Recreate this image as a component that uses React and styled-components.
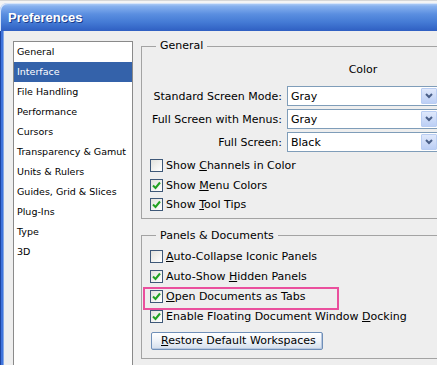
import React from 'react';
import styled, { createGlobalStyle } from 'styled-components';

const GlobalStyle = createGlobalStyle`
  html, body {
    margin: 0;
    padding: 0;
    background: #f2f2f2;
    overflow: hidden;
  }
`;

const Screen = styled.div`
  width: 437px;
  height: 365px;
  overflow: hidden;
  padding-top: 2px;
  box-sizing: border-box;
  background: #f4f4f4;
  border-top: 1px solid #d6d6d6;
`;

const Window = styled.div`
  width: 480px;
`;

const TitleBar = styled.div`
  height: 28px;
  display: flex;
  align-items: center;
  padding-left: 8px;
  border-radius: 7px 0 0 0;
  background: linear-gradient(
    to bottom,
    #b8d3f7 0%,
    #86b0ee 12%,
    #5a8ee0 40%,
    #4379d4 70%,
    #2f5fc2 100%
  );
  box-shadow: inset 1px 1px 0 #d6e4fa;
`;

const Title = styled.span`
  font-family: "Liberation Sans", Arial, sans-serif;
  font-weight: bold;
  font-size: 13px;
  color: #fff;
  text-shadow: 1px 1px 0 #1a3c8c;
`;

const Body = styled.div`
  display: flex;
  align-items: flex-start;
  gap: 8px;
  padding: 10px 0 0 13px;
  height: 340px;
  background: linear-gradient(
    to right,
    #1d44a2 0 1px,
    #3f74dc 1px 3px,
    #86a8e4 3px 4px,
    #eeeeee 4px
  );
  font-family: "DejaVu Sans", Tahoma, sans-serif;
  color: #000;
`;

const ListBox = styled.ul`
  list-style: none;
  margin: 0;
  padding: 0;
  width: 120px;
  height: 340px;
  box-sizing: border-box;
  border: 1px solid #8a8a8a;
  background: #fff;
`;

const ListItem = styled.li`
  height: 20px;
  line-height: 20px;
  padding-left: 3px;
  font-size: 9.5px;
  white-space: nowrap;
  background: ${p => (p.$selected ? '#3462aa' : 'transparent')};
  color: ${p => (p.$selected ? '#fff' : '#000')};
`;

const Column = styled.div`
  display: flex;
  flex-direction: column;
  width: 312px;
  margin-top: -2px;
`;

const Group = styled.fieldset`
  margin: ${p => (p.$spaced ? '10px' : '0')} 0 0 0;
  padding: ${p => p.$pad};
  border: 1px solid #a3a3a3;
  font-size: 11px;
`;

const Legend = styled.legend`
  margin-left: 14px;
  padding: 0 4px;
  line-height: 14px;
  font-size: 11px;
`;

const SelectGrid = styled.div`
  display: grid;
  grid-template-columns: 140px 152px;
  column-gap: 5px;
  row-gap: 3px;
  align-items: center;
`;

const ColorHead = styled.div`
  grid-column: 2;
  text-align: center;
  line-height: 14px;
  margin-bottom: 6px;
`;

const Label = styled.div`
  text-align: right;
  white-space: nowrap;
`;

const Select = styled.div`
  height: 20px;
  box-sizing: border-box;
  border: 1px solid #7f9db9;
  background: #fff;
  display: flex;
  align-items: center;
  justify-content: space-between;
  padding-left: 3px;
`;

const ArrowButton = styled.div`
  width: 16px;
  height: 16px;
  margin-right: 1px;
  box-sizing: border-box;
  border: 1px solid #b9cdf2;
  border-radius: 1px;
  background: linear-gradient(to bottom, #dfe8fb, #bccff5);
  display: flex;
  align-items: center;
  justify-content: center;
`;

const CheckList = styled.div`
  display: flex;
  flex-direction: column;
  margin-top: ${p => p.$top || 0}px;
`;

const CheckRow = styled.div`
  position: relative;
  height: ${p => p.$h}px;
  display: flex;
  align-items: center;
  gap: 3px;
  padding-left: 8px;
  white-space: nowrap;
`;

const Box = styled.span`
  width: 13px;
  height: 13px;
  box-sizing: border-box;
  border: 1px solid #3e5878;
  background: linear-gradient(135deg, #e2e2dc, #ffffff);
  display: flex;
  align-items: center;
  justify-content: center;
`;

const Highlight = styled.div`
  position: absolute;
  left: 1px;
  top: 0;
  width: 196px;
  height: 23px;
  box-sizing: border-box;
  border: 2px solid #ea4f9d;
  pointer-events: none;
`;

const Button = styled.button`
  margin: 5px 0 0 9px;
  width: 172px;
  height: 18px;
  padding: 0 0 0 9px;
  text-align: left;
  font-family: "DejaVu Sans", Tahoma, sans-serif;
  font-size: 11px;
  color: #000;
  border: 1px solid #6f8fb8;
  border-radius: 2px;
  background: linear-gradient(to bottom, #ffffff 0%, #eef2f8 50%, #d4deec 100%);
  box-shadow: inset -1px -1px 0 #b8c8e0;
`;

const Check = () => (
  <svg width="9" height="9" viewBox="0 0 9 9">
    <path d="M1 4.5 L3.5 7 L8 1.5" fill="none" stroke="#21a121" strokeWidth="2" />
  </svg>
);

const Chevron = () => (
  <svg width="8" height="6" viewBox="0 0 8 6">
    <path d="M1 1 L4 4 L7 1" fill="none" stroke="#4a5f88" strokeWidth="2" />
  </svg>
);

const CheckItem = ({ checked, h = 20, highlight, children }) => (
  <CheckRow $h={h}>
    <Box>{checked && <Check />}</Box>
    <span>{children}</span>
    {highlight && <Highlight />}
  </CheckRow>
);

const sections = [
  'General',
  'Interface',
  'File Handling',
  'Performance',
  'Cursors',
  'Transparency & Gamut',
  'Units & Rulers',
  'Guides, Grid & Slices',
  'Plug-Ins',
  'Type',
  '3D',
];

const modes = [
  ['Standard Screen Mode:', 'Gray'],
  ['Full Screen with Menus:', 'Gray'],
  ['Full Screen:', 'Black'],
];

export default function App() {
  return (
    <>
      <GlobalStyle />
      <Screen>
        <Window>
          <TitleBar>
            <Title>Preferences</Title>
          </TitleBar>
          <Body>
            <ListBox>
              {sections.map(s => (
                <ListItem key={s} $selected={s === 'Interface'}>{s}</ListItem>
              ))}
            </ListBox>
            <Column>
              <Group $pad="10px 0 3px 0">
                <Legend>General</Legend>
                <SelectGrid>
                  <ColorHead>Color</ColorHead>
                  {modes.map(([label, value]) => (
                    <React.Fragment key={label}>
                      <Label>{label}</Label>
                      <Select>
                        <span>{value}</span>
                        <ArrowButton><Chevron /></ArrowButton>
                      </Select>
                    </React.Fragment>
                  ))}
                </SelectGrid>
                <CheckList $top={4}>
                  <CheckItem h={19.5}>Show <u>C</u>hannels in Color</CheckItem>
                  <CheckItem h={19.5} checked>Show <u>M</u>enu Colors</CheckItem>
                  <CheckItem h={19.5} checked>Show <u>T</u>ool Tips</CheckItem>
                </CheckList>
              </Group>
              <Group $spaced $pad="4px 0 8px 0">
                <Legend>Panels &amp; Documents</Legend>
                <CheckList>
                  <CheckItem><u>A</u>uto-Collapse Iconic Panels</CheckItem>
                  <CheckItem checked>Auto-Show <u>H</u>idden Panels</CheckItem>
                  <CheckItem checked highlight><u>O</u>pen Documents as Tabs</CheckItem>
                  <CheckItem checked>Enable Floating Document Window <u>D</u>ocking</CheckItem>
                </CheckList>
                <Button><u>R</u>estore Default Workspaces</Button>
              </Group>
            </Column>
          </Body>
        </Window>
      </Screen>
    </>
  );
}
